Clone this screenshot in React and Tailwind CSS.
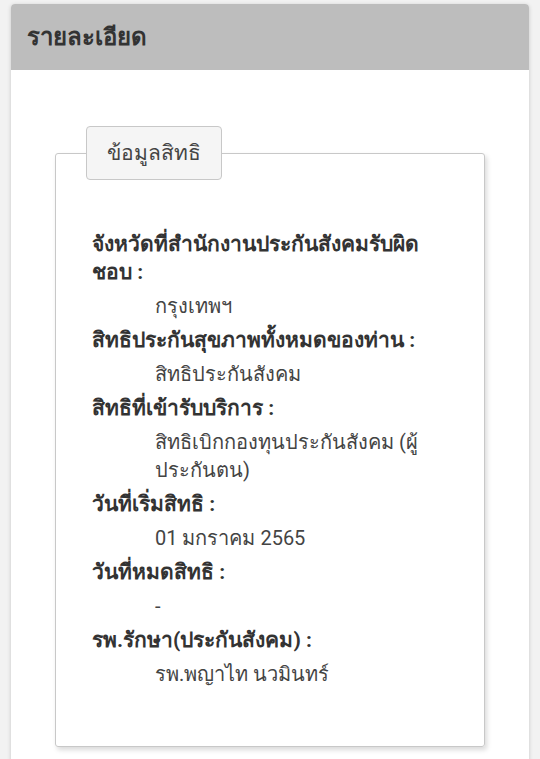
const items = [
  { label: "จังหวัดที่สำนักงานประกันสังคมรับผิดชอบ :", value: "กรุงเทพฯ" },
  { label: "สิทธิประกันสุขภาพทั้งหมดของท่าน :", value: "สิทธิประกันสังคม" },
  { label: "สิทธิที่เข้ารับบริการ :", value: "สิทธิเบิกกองทุนประกันสังคม (ผู้ประกันตน)" },
  { label: "วันที่เริ่มสิทธิ :", value: "01 มกราคม 2565" },
  { label: "วันที่หมดสิทธิ :", value: "-" },
  { label: "รพ.รักษา(ประกันสังคม) :", value: "รพ.พญาไท นวมินทร์" },
];

export default function App() {
  return (
    <div className="min-h-[759px] bg-[#f2f2f2] px-[11px] pt-[4px] font-['Roboto','Noto_Sans',sans-serif]">
      <div className="rounded-t-[4px] bg-white shadow-[0_1px_4px_rgba(0,0,0,0.18)]">
        {/* Header */}
        <div className="flex h-[66px] items-center rounded-t-[4px] bg-[#bdbdbd] px-[16px]">
          <h2 className="text-[24px] font-bold text-[#333]">รายละเอียด</h2>
        </div>

        {/* Body */}
        <div className="px-[44px] pb-[40px] pt-[56px]">
          <fieldset className="rounded-[3px] border border-[#c8c8c8] px-[36px] pb-[58px] pt-[50px] shadow-[2px_3px_5px_rgba(0,0,0,0.15)]">
            <legend className="-ml-[6px] rounded-[4px] border border-[#c8c8c8] bg-[#f5f5f5] px-[20px] py-[12px] text-[21px] leading-[28px] text-[#444]">
              ข้อมูลสิทธิ
            </legend>
            <dl className="space-y-[6px] leading-[28px]">
              {items.map((item) => (
                <div key={item.label} className="space-y-[6px]">
                  <dt className="text-[21px] font-bold text-[#333]">{item.label}</dt>
                  <dd className="pl-[63px] text-[20px] text-[#444]">{item.value}</dd>
                </div>
              ))}
            </dl>
          </fieldset>
        </div>
      </div>
    </div>
  );
}
